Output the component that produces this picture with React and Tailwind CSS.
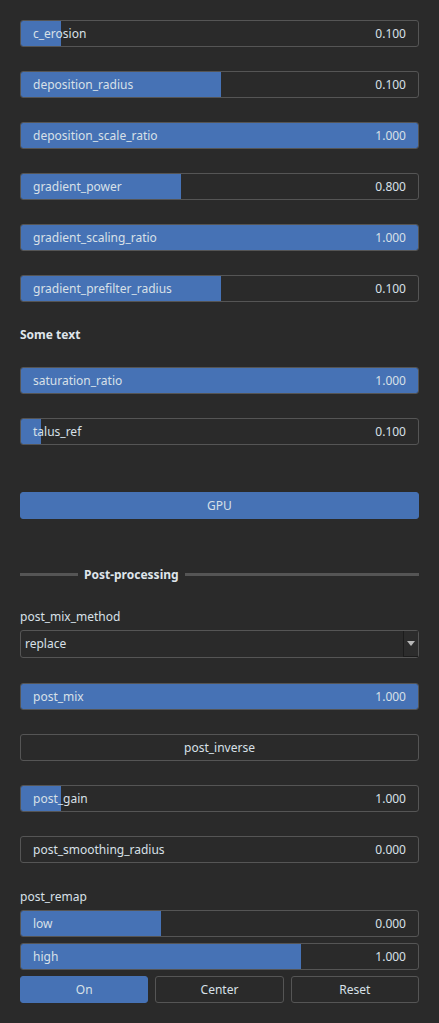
import React from 'react'

const font = { fontFamily: '"Noto Sans", "Open Sans", sans-serif' }

function Slider({ label, value, frac, className = '' }) {
  return (
    <div className={`relative h-[27px] rounded-[3px] border border-[#555555] overflow-hidden ${className}`}>
      <div className="absolute left-0 top-0 bottom-0 bg-[#4672b5]" style={{ width: `${frac * 100}%` }} />
      <div className="relative flex h-full items-center justify-between pl-[12px] pr-[12px] text-[12px] text-[#d8e0e8]">
        <span>{label}</span>
        <span>{value}</span>
      </div>
    </div>
  )
}

function Button({ label, active, className = '' }) {
  return (
    <div className={`flex h-[27px] items-center justify-center rounded-[3px] border text-[12px] text-[#d8e0e8] ${active ? 'bg-[#4672b5] border-[#4672b5]' : 'border-[#555555]'} ${className}`}>
      {label}
    </div>
  )
}

export default function App() {
  const top = [
    ['c_erosion', '0.100', 0.1],
    ['deposition_radius', '0.100', 0.503],
    ['deposition_scale_ratio', '1.000', 1],
    ['gradient_power', '0.800', 0.403],
    ['gradient_scaling_ratio', '1.000', 1],
    ['gradient_prefilter_radius', '0.100', 0.503],
  ]
  return (
    <div style={font} className="min-h-[1023px] w-[439px] bg-[#2a2a2a] px-[20px] pt-[20px]">
      <div className="flex flex-col gap-[24px]">
        {top.map(([l, v, f]) => <Slider key={l} label={l} value={v} frac={f} />)}
      </div>
      <div className="mt-[24px] h-[17px] text-[12px] font-bold leading-[17px] text-[#dfe5eb]">Some text</div>
      <Slider className="mt-[24px]" label="saturation_ratio" value="1.000" frac={1} />
      <Slider className="mt-[24px]" label="talus_ref" value="0.100" frac={0.05} />
      <Button className="mt-[47px]" label="GPU" active />

      <div className="mt-[47px] flex items-center gap-[6px]">
        <div className="h-[3px] w-[58px] bg-[#555555]" />
        <span className="text-[12px] font-bold leading-[17px] text-[#dfe5eb]">Post-processing</span>
        <div className="h-[3px] flex-1 bg-[#555555]" />
      </div>

      <div className="mt-[25px] h-[17px] text-[12px] leading-[17px] text-[#d8e0e8]">post_mix_method</div>
      <div className="mt-[5px] flex h-[28px] items-stretch rounded-[3px] border border-[#555555]">
        <div className="flex flex-1 items-center pl-[4px] text-[12px] text-[#d8e0e8]">replace</div>
        <div className="flex w-[15px] items-center justify-center border-l border-b border-[#1c1c1c] bg-[#2c2c2c]">
          <svg width="8" height="5" viewBox="0 0 8 5"><path d="M0 0H8L4 5Z" fill="#b8b8b8" /></svg>
        </div>
      </div>

      <Slider className="mt-[25px]" label="post_mix" value="1.000" frac={1} />
      <Button className="mt-[24px]" label="post_inverse" />
      <Slider className="mt-[24px]" label="post_gain" value="1.000" frac={0.1} />
      <Slider className="mt-[24px]" label="post_smoothing_radius" value="0.000" frac={0} />

      <div className="mt-[25px] h-[17px] text-[12px] leading-[17px] text-[#d8e0e8]">post_remap</div>
      <div className="mt-[5px] flex flex-col gap-[6px]">
        <Slider label="low" value="0.000" frac={0.352} />
        <Slider label="high" value="1.000" frac={0.705} />
        <div className="flex gap-[7px]">
          <Button className="flex-1" label="On" active />
          <Button className="flex-1" label="Center" />
          <Button className="flex-1" label="Reset" />
        </div>
      </div>
    </div>
  )
}
